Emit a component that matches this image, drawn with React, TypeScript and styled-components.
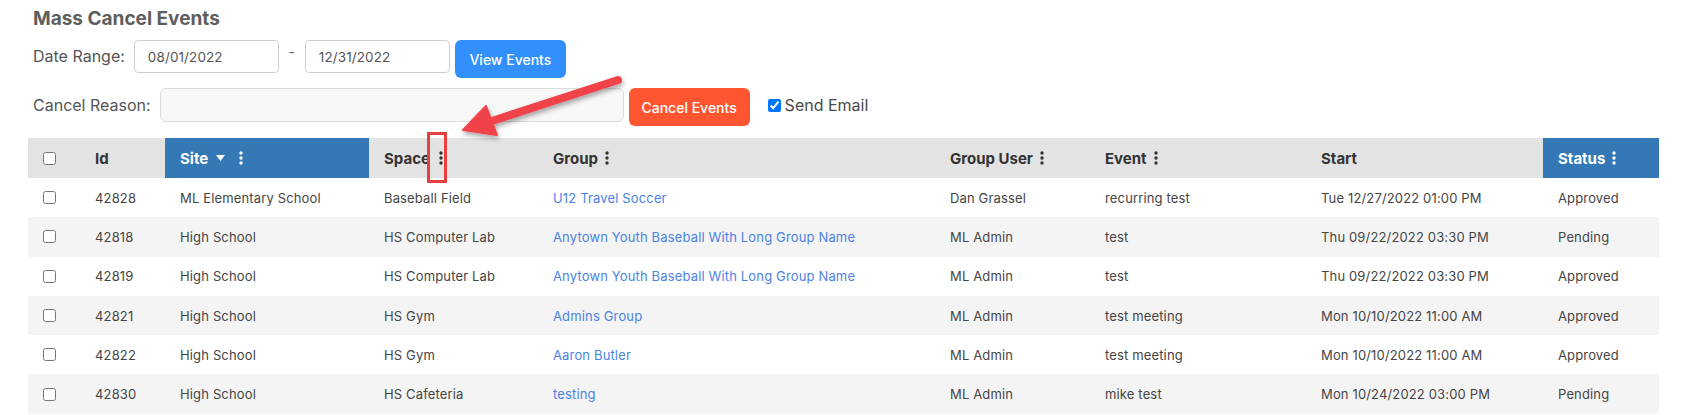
import React from "react";
import styled, { createGlobalStyle } from "styled-components";

const GlobalStyle = createGlobalStyle`
  body {
    margin: 0;
    font-family: Inter, "Noto Sans", Arial, sans-serif;
    background: #fff;
    color: #444;
  }
`;

const Page = styled.div`
  position: relative;
  padding: 8px 28px 0;
`;

const Controls = styled.div`
  padding-left: 5px;
`;

const Title = styled.h2`
  margin: 0;
  font-size: 19px;
  line-height: 22px;
  font-weight: 700;
  color: #5e5e5e;
`;

const FormRow = styled.div`
  display: flex;
  align-items: flex-start;
  margin-top: 10px;
`;

const Label = styled.label<{ $h: number }>`
  font-size: 16px;
  line-height: ${(p) => p.$h}px;
  color: #555;
  margin-right: 9px;
  white-space: nowrap;
`;

const DateInput = styled.input`
  box-sizing: border-box;
  width: 145px;
  height: 33px;
  border: 1px solid #cfcfcf;
  border-radius: 4px;
  padding: 0 13px;
  font-family: inherit;
  font-size: 13.5px;
  letter-spacing: 0.1px;
  color: #555;
  background: #fff;
`;

const Dash = styled.span`
  width: 26px;
  text-align: center;
  font-size: 14px;
  line-height: 24px;
  color: #666;
`;

const ReasonInput = styled.input`
  box-sizing: border-box;
  width: 464px;
  height: 34px;
  border: 1px solid #dcdcdc;
  border-radius: 6px;
  background: #f8f8f8;
`;

const Button = styled.button<{ $color: string; $w: number }>`
  box-sizing: border-box;
  width: ${(p) => p.$w}px;
  height: 38px;
  margin-left: 5px;
  border: none;
  border-radius: 6px;
  background: ${(p) => p.$color};
  color: #fff;
  font-family: inherit;
  font-size: 14px;
  font-weight: 500;
`;

const EmailToggle = styled.label`
  display: flex;
  align-items: center;
  height: 34px;
  margin-left: 18px;
  font-size: 16px;
  color: #4a4a4a;

  input {
    width: 13px;
    height: 13px;
    margin: 0 4px 0 0;
  }
`;

const Table = styled.table`
  margin-top: 12px;
  border-collapse: collapse;
  table-layout: fixed;
  width: 1631px;
`;

const Th = styled.th<{ $active?: boolean }>`
  height: 40px;
  padding: 0 15px;
  text-align: left;
  font-size: 15px;
  font-weight: 700;
  color: ${(p) => (p.$active ? "#fff" : "#333")};
  background: ${(p) => (p.$active ? "#3479b5" : "#e3e3e3")};
  white-space: nowrap;
`;

const HeadInner = styled.span`
  display: inline-flex;
  align-items: center;
`;

const Row = styled.tr`
  height: 39.3px;
  &:nth-child(even) {
    background: #f4f4f4;
  }
`;

const Td = styled.td`
  padding: 0 15px;
  font-size: 13px;
  letter-spacing: 0.15px;
  color: #454545;
  white-space: nowrap;
`;

const GroupLink = styled.a`
  color: #4b82e6;
  text-decoration: none;
`;

const Check = styled.input`
  display: block;
  width: 13px;
  height: 13px;
  margin: 0;
`;

const Kebab = styled.svg<{ $gap: number }>`
  margin-left: ${(p) => p.$gap}px;
  flex: none;
`;

const SortCaret = styled.svg`
  margin-left: 8px;
  margin-right: 7px;
`;

const Overlay = styled.svg`
  position: absolute;
  top: 0;
  left: 0;
  pointer-events: none;
  overflow: visible;
`;

const Dots = ({ gap = 7 }: { gap?: number }) => (
  <Kebab $gap={gap} width="4" height="14" viewBox="0 0 4 14">
    <circle cx="2" cy="2" r="1.7" fill="currentColor" />
    <circle cx="2" cy="7" r="1.7" fill="currentColor" />
    <circle cx="2" cy="12" r="1.7" fill="currentColor" />
  </Kebab>
);

const rows = [
  ["42828", "ML Elementary School", "Baseball Field", "U12 Travel Soccer", "Dan Grassel", "recurring test", "Tue 12/27/2022 01:00 PM", "Approved"],
  ["42818", "High School", "HS Computer Lab", "Anytown Youth Baseball With Long Group Name", "ML Admin", "test", "Thu 09/22/2022 03:30 PM", "Pending"],
  ["42819", "High School", "HS Computer Lab", "Anytown Youth Baseball With Long Group Name", "ML Admin", "test", "Thu 09/22/2022 03:30 PM", "Approved"],
  ["42821", "High School", "HS Gym", "Admins Group", "ML Admin", "test meeting", "Mon 10/10/2022 11:00 AM", "Approved"],
  ["42822", "High School", "HS Gym", "Aaron Butler", "ML Admin", "test meeting", "Mon 10/10/2022 11:00 AM", "Approved"],
  ["42830", "High School", "HS Cafeteria", "testing", "ML Admin", "mike test", "Mon 10/24/2022 03:00 PM", "Pending"],
];

const widths = [52, 85, 204, 169, 397, 155, 216, 237, 116];

const App: React.FC = () => {
  return (
    <Page>
      <GlobalStyle />
      <Controls>
        <Title>Mass Cancel Events</Title>
        <FormRow>
          <Label $h={33}>Date Range:</Label>
          <DateInput defaultValue="08/01/2022" />
          <Dash>-</Dash>
          <DateInput defaultValue="12/31/2022" />
          <Button $color="#3190fc" $w={111}>View Events</Button>
        </FormRow>
        <FormRow>
          <Label $h={34}>Cancel Reason:</Label>
          <ReasonInput />
          <Button $color="#ff5530" $w={121}>Cancel Events</Button>
          <EmailToggle>
            <input type="checkbox" defaultChecked />
            Send Email
          </EmailToggle>
        </FormRow>
      </Controls>

      <Table>
        <colgroup>
          {widths.map((w, i) => (
            <col key={i} style={{ width: w }} />
          ))}
        </colgroup>
        <thead>
          <tr>
            <Th><Check type="checkbox" /></Th>
            <Th>Id</Th>
            <Th $active>
              <HeadInner>
                Site
                <SortCaret width="9" height="6" viewBox="0 0 9 6">
                  <polygon points="0,0 9,0 4.5,6" fill="#fff" />
                </SortCaret>
                <Dots />
              </HeadInner>
            </Th>
            <Th><HeadInner>Space<Dots gap={9} /></HeadInner></Th>
            <Th><HeadInner>Group<Dots /></HeadInner></Th>
            <Th><HeadInner>Group User<Dots /></HeadInner></Th>
            <Th><HeadInner>Event<Dots /></HeadInner></Th>
            <Th>Start</Th>
            <Th $active><HeadInner>Status<Dots /></HeadInner></Th>
          </tr>
        </thead>
        <tbody>
          {rows.map((r) => (
            <Row key={r[0]}>
              <Td><Check type="checkbox" /></Td>
              <Td>{r[0]}</Td>
              <Td>{r[1]}</Td>
              <Td>{r[2]}</Td>
              <Td><GroupLink href="#">{r[3]}</GroupLink></Td>
              <Td>{r[4]}</Td>
              <Td>{r[5]}</Td>
              <Td>{r[6]}</Td>
              <Td>{r[7]}</Td>
            </Row>
          ))}
        </tbody>
      </Table>

      <Overlay width="1691" height="415" viewBox="0 0 1691 415">
        <defs>
          <filter id="shadow" x="-20%" y="-50%" width="140%" height="200%">
            <feDropShadow dx="1" dy="3" stdDeviation="2.5" floodColor="#000" floodOpacity="0.35" />
          </filter>
        </defs>
        <g filter="url(#shadow)" fill="#f0434a" stroke="#f0434a">
          <line x1="618" y1="80" x2="492" y2="121" strokeWidth="8" strokeLinecap="round" />
          <polygon points="463,130 486,106 497,135" strokeWidth="2" strokeLinejoin="round" />
        </g>
        <rect x="428.5" y="133.5" width="17" height="48" fill="none" stroke="#e8403f" strokeWidth="3" />
      </Overlay>
    </Page>
  );
};

export default App;
